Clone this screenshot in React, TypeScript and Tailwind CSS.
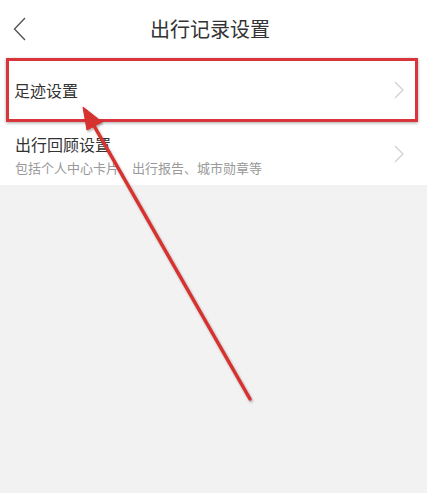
const font = { fontFamily: '"Noto Sans CJK SC", "Noto Sans", sans-serif' };

const Chevron = () => (
  <svg width="10" height="18" viewBox="0 0 10 18" fill="none" stroke="#cfcfcf" strokeWidth="1.2">
    <polyline points="1,1 9,9 1,17" />
  </svg>
);

const App = () => {
  return (
    <div className="relative h-[493px] w-[427px] overflow-hidden bg-[#f2f2f2]" style={font}>
      {/* header */}
      <div className="flex h-[58px] items-center bg-white pl-[13px]">
        <svg width="14" height="24" viewBox="0 0 14 24" fill="none" stroke="#555" strokeWidth="1.4">
          <polyline points="12,1 1.5,12 12,23" />
        </svg>
        <div className="flex-1 pr-[34px] text-center text-[20px] text-[#333]">出行记录设置</div>
      </div>

      {/* rows */}
      <div className="bg-white">
        <div className="relative flex h-[64px] items-center justify-between pl-[14px] pr-[23px]">
          <span className="text-[16px] text-[#333]">足迹设置</span>
          <Chevron />
          {/* annotation box */}
          <div className="absolute top-0 bottom-0 left-[6px] right-[9px] border-[3px] border-[#d8343b] shadow-[0_1px_3px_rgba(0,0,0,0.35)]"></div>
        </div>
        <div className="flex h-[63px] items-center justify-between pl-[15px] pr-[23px]">
          <div className="flex flex-col pt-[2px]">
            <span className="text-[16px] leading-6 text-[#333]">出行回顾设置</span>
            <span className="mt-[2px] text-[13px] leading-5 text-[#999]">包括个人中心卡片、出行报告、城市勋章等</span>
          </div>
          <Chevron />
        </div>
      </div>

      {/* annotation arrow */}
      <svg className="pointer-events-none absolute inset-0" width="427" height="493" viewBox="0 0 427 493">
        <defs>
          <filter id="sh" x="-20%" y="-20%" width="140%" height="140%">
            <feDropShadow dx="1" dy="1.5" stdDeviation="1.2" floodColor="#000" floodOpacity="0.35" />
          </filter>
        </defs>
        <g filter="url(#sh)" fill="#d6302f" stroke="#d6302f">
          <line x1="250" y1="399" x2="93" y2="124" strokeWidth="3.5" strokeLinecap="round" />
          <polygon points="83,107 102,122 87,130" strokeWidth="1" strokeLinejoin="round" />
        </g>
      </svg>
    </div>
  );
};

export default App;
